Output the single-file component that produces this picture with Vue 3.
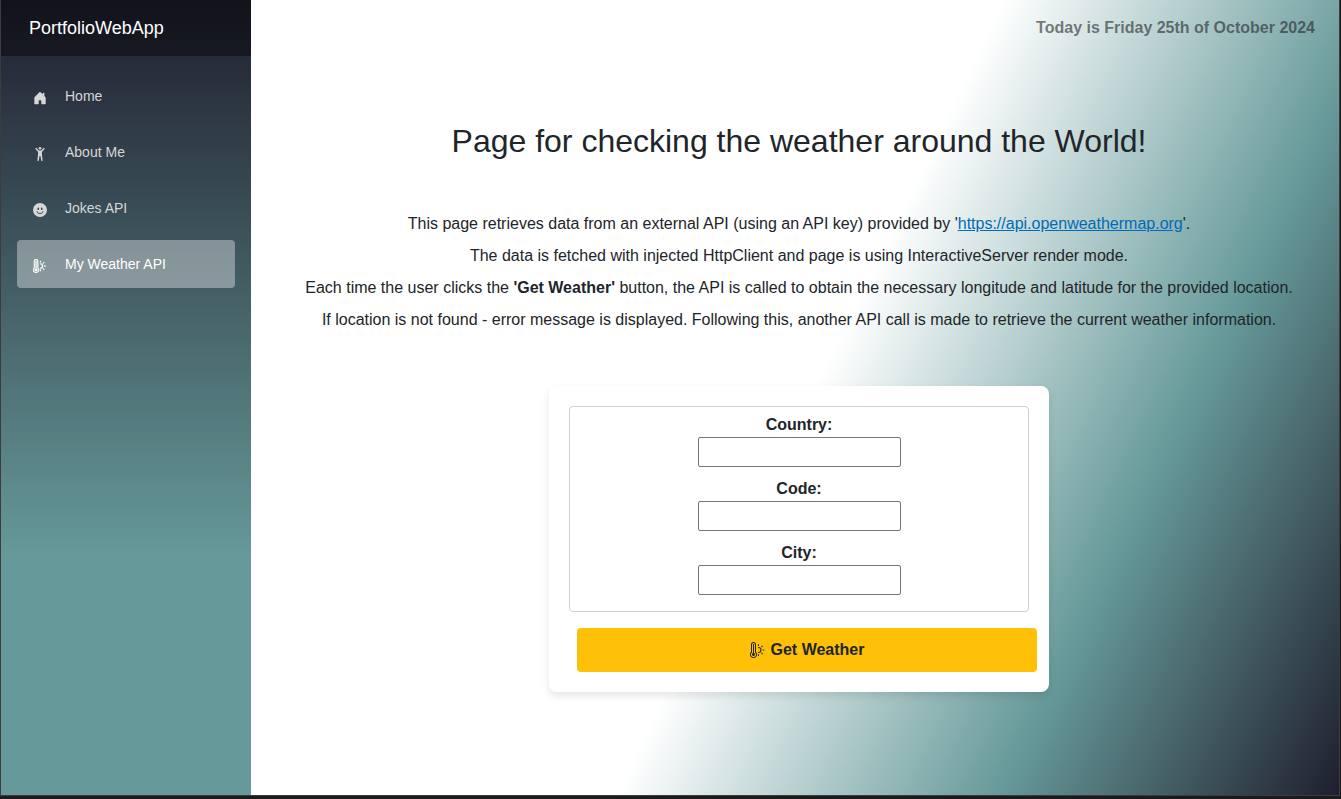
<script setup>
const links = [
  { label: 'Home', icon: 'house' },
  { label: 'About Me', icon: 'person' },
  { label: 'Jokes API', icon: 'smile' },
  { label: 'My Weather API', icon: 'thermo', active: true },
]
const fields = [
  { id: 'country', label: 'Country:' },
  { id: 'code', label: 'Code:' },
  { id: 'city', label: 'City:' },
]
const icons = {
  house: ['M6.5 14.5v-3.505c0-.245.25-.495.5-.495h2c.25 0 .5.25.5.5v3.5a.5.5 0 0 0 .5.5h4a.5.5 0 0 0 .5-.5v-7a.5.5 0 0 0-.146-.354L13 5.793V2.5a.5.5 0 0 0-.5-.5h-1a.5.5 0 0 0-.5.5v1.293L8.354 1.146a.5.5 0 0 0-.708 0l-6 6A.5.5 0 0 0 1.5 7.5v7a.5.5 0 0 0 .5.5h4a.5.5 0 0 0 .5-.5Z'],
  person: [
    'M8 3a1.5 1.5 0 1 0 0-3 1.5 1.5 0 0 0 0 3',
    'm5.93 6.704-.846 8.451a.768.768 0 0 0 1.523.203l.81-4.865a.59.59 0 0 1 1.165 0l.81 4.865a.768.768 0 0 0 1.523-.203l-.845-8.451A1.5 1.5 0 0 1 10.5 5.5L13 2.284a.796.796 0 0 0-1.239-.998L9.634 3.84a.7.7 0 0 1-.33.235c-.23.074-.665.176-1.304.176-.64 0-1.074-.102-1.305-.176a.7.7 0 0 1-.329-.235L4.239 1.286a.796.796 0 0 0-1.24.998l2.5 3.216c.317.316.475.758.43 1.204Z',
  ],
  smile: ['M8 16A8 8 0 1 0 8 0a8 8 0 0 0 0 16M7 6.5C7 7.328 6.552 8 6 8s-1-.672-1-1.5S5.448 5 6 5s1 .672 1 1.5M4.285 9.567a.5.5 0 0 1 .683.183A3.5 3.5 0 0 0 8 11.5a3.5 3.5 0 0 0 3.032-1.75.5.5 0 1 1 .866.5A4.5 4.5 0 0 1 8 12.5a4.5 4.5 0 0 1-3.898-2.25.5.5 0 0 1 .183-.683M10 8c-.552 0-1-.672-1-1.5S9.448 5 10 5s1 .672 1 1.5S10.552 8 10 8'],
  thermo: [
    'M5 12.5a1.5 1.5 0 1 1-2-1.415V2.5a.5.5 0 0 1 1 0v8.585A1.5 1.5 0 0 1 5 12.5',
    'M1 2.5a2.5 2.5 0 0 1 5 0v7.55a3.5 3.5 0 1 1-5 0zM3.5 1A1.5 1.5 0 0 0 2 2.5v7.987l-.167.15a2.5 2.5 0 1 0 3.333 0L5 10.486V2.5A1.5 1.5 0 0 0 3.5 1m5 1a.5.5 0 0 1 .5.5v1a.5.5 0 0 1-1 0v-1a.5.5 0 0 1 .5-.5m4.243 1.757a.5.5 0 0 1 0 .707l-.707.708a.5.5 0 1 1-.708-.708l.708-.707a.5.5 0 0 1 .707 0M8 5.5a.5.5 0 0 1 .5-.5 3 3 0 1 1 0 6 .5.5 0 0 1 0-1 2 2 0 0 0 0-4 .5.5 0 0 1-.5-.5M12.5 8a.5.5 0 0 1 .5-.5h1a.5.5 0 1 1 0 1h-1a.5.5 0 0 1-.5-.5m-1.172 2.828a.5.5 0 0 1 .708 0l.707.708a.5.5 0 0 1-.707.707l-.708-.707a.5.5 0 0 1 0-.708M8.5 12a.5.5 0 0 1 .5.5v1a.5.5 0 0 1-1 0v-1a.5.5 0 0 1 .5-.5',
  ],
}
</script>

<template>
  <div class="page">
    <aside class="sidebar">
      <header class="brand-row"><a class="brand" href="#">PortfolioWebApp</a></header>
      <nav class="nav">
        <a v-for="l in links" :key="l.label" href="#" class="nav-link" :class="{ active: l.active }">
          <svg class="nav-icon" :class="l.icon" viewBox="0 0 16 16" aria-hidden="true">
            <path v-for="d in icons[l.icon]" :key="d" :d="d" />
          </svg>
          <span>{{ l.label }}</span>
        </a>
      </nav>
    </aside>
    <main class="main">
      <div class="date-row">Today is Friday 25th of October 2024</div>
      <article class="content">
        <h1>Page for checking the weather around the World!</h1>
        <div class="intro">
          <p>This page retrieves data from an external API (using an API key) provided by '<a href="#">https://api.openweathermap.org</a>'.</p>
          <p>The data is fetched with injected HttpClient and page is using InteractiveServer render mode.</p>
          <p>Each time the user clicks the <b>'Get Weather'</b> button, the API is called to obtain the necessary longitude and latitude for the provided location.</p>
          <p>If location is not found - error message is displayed. Following this, another API call is made to retrieve the current weather information.</p>
        </div>
        <form class="card" @submit.prevent>
          <div class="fields">
            <div v-for="f in fields" :key="f.id" class="field">
              <label :for="f.id">{{ f.label }}</label>
              <input :id="f.id" type="text" />
            </div>
          </div>
          <button class="submit" type="submit">
            <svg class="btn-icon" viewBox="0 0 16 16" aria-hidden="true">
              <path v-for="d in icons.thermo" :key="d" :d="d" />
            </svg>
            <span>Get Weather</span>
          </button>
        </form>
      </article>
    </main>
  </div>
</template>

<style>
body {
  background: #1b1b1b;
}
</style>

<style scoped>
.page,
.page * {
  box-sizing: border-box;
}
.page {
  display: flex;
  min-height: calc(100vh - 3px);
  border: 1px solid #3c3c3c;
  border-top: 0;
  margin-right: 1px;
  font-family: "Liberation Sans", Arial, sans-serif;
  font-size: 16px;
  line-height: 24px;
  color: #212529;
}
.sidebar {
  width: 250px;
  flex: none;
  background: linear-gradient(180deg, #1f1f2e 0%, #669999 70%);
}
.brand-row {
  height: 56px;
  display: flex;
  align-items: center;
  padding-left: 28px;
  background: rgba(0, 0, 0, 0.4);
}
.brand {
  color: #fff;
  font-size: 18px;
  text-decoration: none;
}
.nav {
  display: flex;
  flex-direction: column;
  gap: 8px;
  padding: 16px;
}
.nav-link {
  display: flex;
  align-items: center;
  height: 48px;
  padding-left: 16px;
  gap: 18px;
  border-radius: 4px;
  color: #d7d7d7;
  font-size: 14px;
  text-decoration: none;
}
.nav-link.active {
  background: rgba(255, 255, 255, 0.37);
  color: #fff;
}
.nav-icon {
  width: 14px;
  height: 14px;
  margin-top: 4px;
  fill: currentColor;
}
.nav-icon.thermo {
  stroke: currentColor;
  stroke-width: 0.4;
}
.main {
  flex: 1;
  min-width: 0;
  background: linear-gradient(116deg, #fff 51%, #669999 77%, #1f1f2e 100%);
}
.date-row {
  height: 56px;
  display: flex;
  align-items: center;
  justify-content: flex-end;
  padding-right: 24px;
  font-weight: bold;
  color: rgba(33, 37, 41, 0.6);
}
.content {
  display: flex;
  flex-direction: column;
  align-items: center;
  padding: 64px 24px 100px 32px;
  text-align: center;
}
h1 {
  margin: 0;
  font-size: 32px;
  font-weight: normal;
  line-height: 42px;
}
.intro {
  margin-top: 46px;
  line-height: 32px;
}
.intro p {
  margin: 0;
}
.intro a {
  color: #006bb7;
}
.card {
  width: 500px;
  max-width: 100%;
  margin-top: 50px;
  padding: 20px;
  border-radius: 8px;
  background: #fff;
  box-shadow: 0 4px 8px rgba(0, 0, 0, 0.1);
}
.fields {
  display: flex;
  flex-direction: column;
  gap: 10px;
  padding: 6px 16px 16px;
  border: 1px solid #ced0d6;
  border-radius: 4px;
}
.field {
  display: flex;
  flex-direction: column;
  align-items: center;
}
label {
  font-weight: bold;
}
input {
  width: 203px;
  height: 30px;
  border: 1px solid #767676;
  border-radius: 2px;
  background: #fff;
  font: inherit;
}
.submit {
  display: flex;
  align-items: center;
  justify-content: center;
  gap: 5px;
  width: 100%;
  height: 44px;
  margin: 16px 0 0 8px;
  border: 0;
  border-radius: 4px;
  background: #ffc107;
  color: #212529;
  font: inherit;
  font-weight: bold;
}
.btn-icon {
  width: 16px;
  height: 16px;
  fill: currentColor;
}
</style>
